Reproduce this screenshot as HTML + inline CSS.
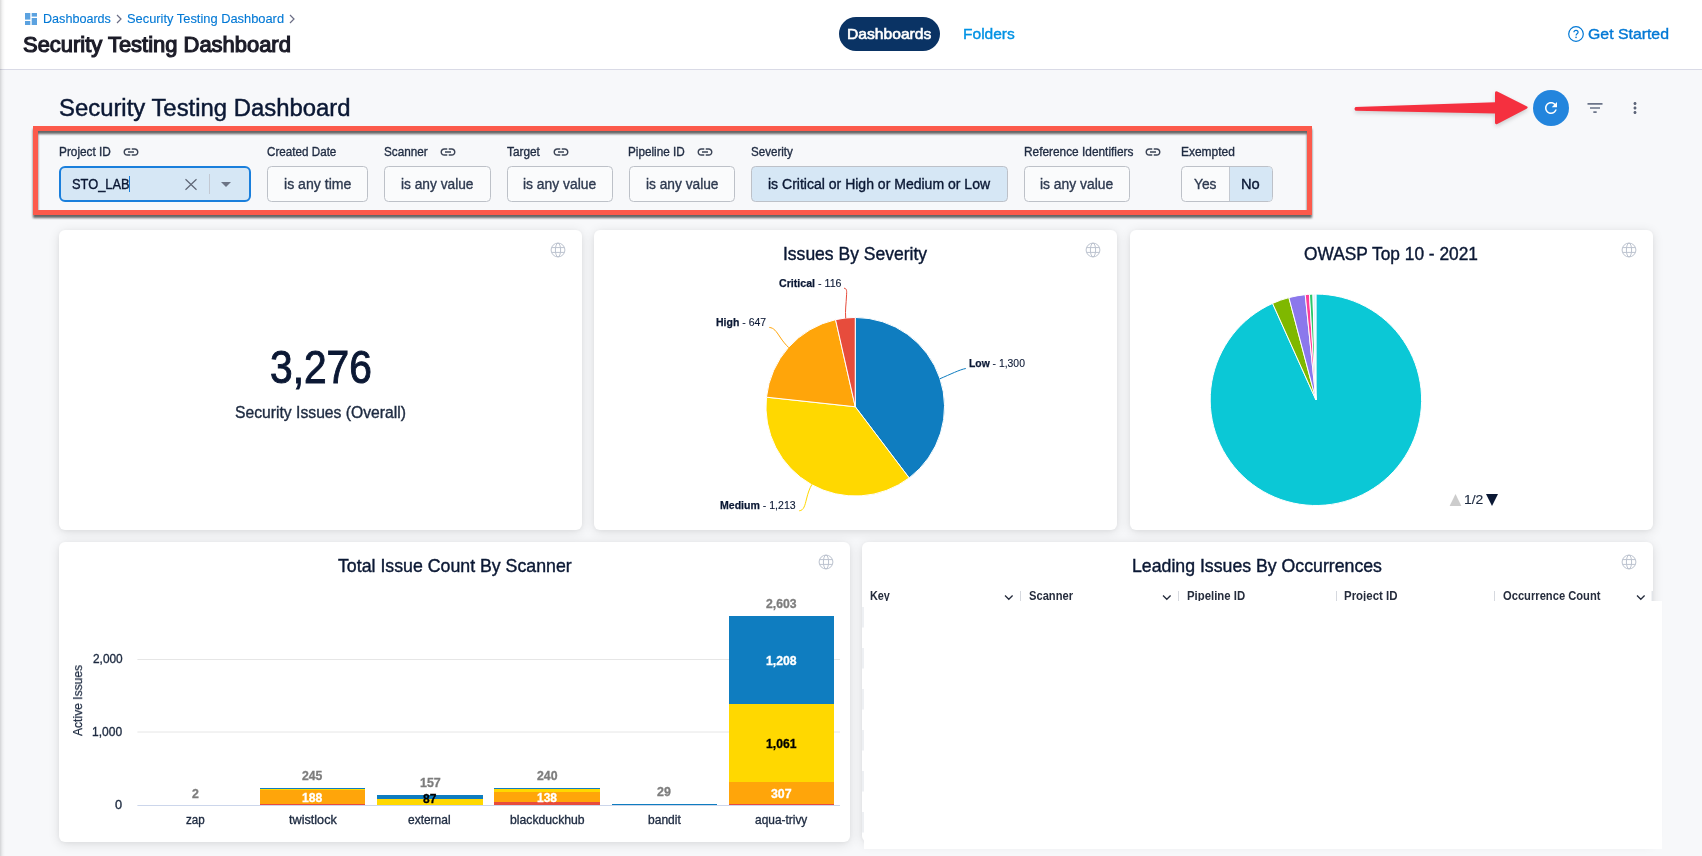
<!DOCTYPE html>
<html lang="en"><head><meta charset="utf-8"><title>Security Testing Dashboard</title>
<style>
*{box-sizing:border-box;margin:0;padding:0}
html,body{width:1702px;height:856px;overflow:hidden}
body{background:#f7f8fa;font-family:"Liberation Sans",sans-serif;position:relative;color:#0b1834}
.abs{position:absolute}
#txt{position:absolute;left:0;top:0;width:0;height:0}
.t{position:absolute;white-space:nowrap;transform-origin:0 0;display:block;line-height:normal}
.t b{font-weight:700;-webkit-text-stroke:.25px}
#hdr{position:absolute;left:0;top:0;width:1702px;height:70px;background:#fff;border-bottom:1px solid #d9dae6}
#edge{position:absolute;left:0;top:0;width:5px;height:856px;background:linear-gradient(90deg,rgba(0,0,0,.15),rgba(0,0,0,.09) 25%,rgba(0,0,0,.035) 55%,rgba(0,0,0,0))}
#pill{position:absolute;left:839px;top:17px;width:101px;height:34px;border-radius:17px;background:#0a3364}
svg{position:absolute;overflow:visible}
.card{position:absolute;background:#fff;border-radius:6px;box-shadow:0 2px 12px rgba(0,0,0,.11),0 1px 4px rgba(0,0,0,.04)}
.fbox{position:absolute;top:166px;height:36px;border:1px solid #bdc1c8;border-radius:4.5px;background:#fafbfc}
.fbox.sel{background:#d6e7f5}
#redbox{position:absolute;left:33px;top:126px;width:1279px;height:89px;border:5px solid #fc5a4b;filter:drop-shadow(0 3px 1.3px rgba(38,40,40,.7))}
#refresh{position:absolute;left:1533px;top:90px;width:36px;height:36px;border-radius:50%;background:#2385dd}
#ov{position:absolute;left:864px;top:601px;width:798px;height:248px;background:#fff}

</style></head>
<body>
<div id="hdr"></div>
<div id="edge"></div>
<!-- breadcrumb icon -->
<svg style="left:25px;top:13px" width="12" height="12" viewBox="0 0 12 12"><g fill="#5ba2e0"><rect x="0" y="0" width="5.3" height="6.6"/><rect x="6.7" y="0" width="5.3" height="3.6"/><rect x="0" y="8" width="5.3" height="4"/><rect x="6.7" y="5" width="5.3" height="7"/></g></svg>
<svg style="left:116px;top:14px" width="6" height="10" viewBox="0 0 6 10"><path d="M1 1 L5 5 L1 9" fill="none" stroke="#6b6d85" stroke-width="1.2"/></svg>
<svg style="left:289px;top:14px" width="6" height="10" viewBox="0 0 6 10"><path d="M1 1 L5 5 L1 9" fill="none" stroke="#6b6d85" stroke-width="1.2"/></svg>
<div id="pill"></div>
<!-- help icon -->
<svg style="left:1568px;top:26px" width="16" height="16" viewBox="0 0 16 16"><circle cx="8" cy="8" r="7.3" fill="none" stroke="#0278d5" stroke-width="1.2"/><path d="M5.9 6.3c0-1.2.9-2 2.1-2s2.1.8 2.1 1.9c0 1.5-2 1.7-2 3.2" fill="none" stroke="#0278d5" stroke-width="1.2"/><circle cx="8.05" cy="11.4" r=".8" fill="#0278d5"/></svg>

<!-- red arrow -->
<svg style="left:0;top:0" width="1702" height="140" viewBox="0 0 1702 140"><g filter="drop-shadow(0 2px 2px rgba(0,0,0,.18))"><path d="M1355.5 107 L1495 102.2 L1495 93 Q1495 90.4 1497.3 91.6 L1526.6 106.3 Q1528.8 107.5 1526.6 108.7 L1497.3 123.9 Q1495 125.1 1495 122.5 L1495 113.5 L1355.5 110.7 Q1353.5 108.8 1355.5 107 Z" fill="#f5303f"/></g></svg>
<div id="refresh"></div>
<svg style="left:1542px;top:99px" width="18" height="18" viewBox="0 0 24 24"><path fill="#fff" d="M17.65 6.35C16.2 4.9 14.21 4 12 4c-4.42 0-7.99 3.58-7.99 8s3.57 8 7.99 8c3.73 0 6.84-2.55 7.73-6h-2.08c-.82 2.33-3.04 4-5.65 4-3.31 0-6-2.69-6-6s2.69-6 6-6c1.66 0 3.14.69 4.22 1.78L13 11h7V4l-2.35 2.35z"/></svg>
<svg style="left:1585px;top:98px" width="20" height="20" viewBox="0 0 24 24"><path fill="#6b7489" d="M10 18h4v-2h-4v2zM3 6v2h18V6H3zm3 7h12v-2H6v2z"/></svg>
<svg style="left:1626px;top:99px" width="18" height="18" viewBox="0 0 24 24"><path fill="#5d6579" d="M12 8c1.1 0 2-.9 2-2s-.9-2-2-2-2 .9-2 2 .9 2 2 2zm0 2c-1.1 0-2 .9-2 2s.9 2 2 2 2-.9 2-2-.9-2-2-2zm0 6c-1.1 0-2 .9-2 2s.9 2 2 2 2-.9 2-2-.9-2-2-2z"/></svg>

<!-- filters -->
<div id="redbox"></div>
<div class="fbox sel" style="left:59px;width:192px;border:2px solid #1a7fdc;border-radius:6px"></div>
<div class="abs" style="left:129px;top:176px;width:1px;height:16px;background:#1a7fdc"></div>
<svg style="left:185px;top:179px" width="12" height="11" viewBox="0 0 12 11"><path d="M.5 .3 L11.5 10.7 M11.5 .3 L.5 10.7" stroke="#5f6675" stroke-width="1.2" fill="none"/></svg>
<div class="abs" style="left:209px;top:174px;width:1px;height:20px;background:#c3c9d3"></div>
<svg style="left:221px;top:182px" width="10" height="5" viewBox="0 0 10 5"><path d="M0 0H10L5 5Z" fill="#6c7485"/></svg>
<div class="fbox" style="left:267px;width:101px"></div>
<div class="fbox" style="left:384px;width:107px"></div>
<div class="fbox" style="left:507px;width:106px"></div>
<div class="fbox" style="left:629px;width:106px"></div>
<div class="fbox sel" style="left:751px;width:257px"></div>
<div class="fbox" style="left:1024px;width:106px"></div>
<div class="fbox" style="left:1181px;width:92px;overflow:hidden"><div class="abs" style="left:47px;top:0;width:44px;height:34px;background:#d6e7f5;border-left:1px solid #c4c9d1"></div></div>
<!-- link icons -->
<svg class="lnk" style="left:122px;top:143px" width="18" height="18" viewBox="0 0 24 24"><path fill="#3d4557" d="M3.9 12c0-1.71 1.39-3.1 3.1-3.1h4V7H7c-2.76 0-5 2.24-5 5s2.24 5 5 5h4v-1.9H7c-1.71 0-3.1-1.39-3.1-3.1zM8 13h8v-2H8v2zm9-6h-4v1.9h4c1.71 0 3.1 1.39 3.1 3.1s-1.39 3.1-3.1 3.1h-4V17h4c2.76 0 5-2.24 5-5s-2.24-5-5-5z"/></svg>
<svg class="lnk" style="left:439px;top:143px" width="18" height="18" viewBox="0 0 24 24"><path fill="#3d4557" d="M3.9 12c0-1.71 1.39-3.1 3.1-3.1h4V7H7c-2.76 0-5 2.24-5 5s2.24 5 5 5h4v-1.9H7c-1.71 0-3.1-1.39-3.1-3.1zM8 13h8v-2H8v2zm9-6h-4v1.9h4c1.71 0 3.1 1.39 3.1 3.1s-1.39 3.1-3.1 3.1h-4V17h4c2.76 0 5-2.24 5-5s-2.24-5-5-5z"/></svg>
<svg class="lnk" style="left:552px;top:143px" width="18" height="18" viewBox="0 0 24 24"><path fill="#3d4557" d="M3.9 12c0-1.71 1.39-3.1 3.1-3.1h4V7H7c-2.76 0-5 2.24-5 5s2.24 5 5 5h4v-1.9H7c-1.71 0-3.1-1.39-3.1-3.1zM8 13h8v-2H8v2zm9-6h-4v1.9h4c1.71 0 3.1 1.39 3.1 3.1s-1.39 3.1-3.1 3.1h-4V17h4c2.76 0 5-2.24 5-5s-2.24-5-5-5z"/></svg>
<svg class="lnk" style="left:696px;top:143px" width="18" height="18" viewBox="0 0 24 24"><path fill="#3d4557" d="M3.9 12c0-1.71 1.39-3.1 3.1-3.1h4V7H7c-2.76 0-5 2.24-5 5s2.24 5 5 5h4v-1.9H7c-1.71 0-3.1-1.39-3.1-3.1zM8 13h8v-2H8v2zm9-6h-4v1.9h4c1.71 0 3.1 1.39 3.1 3.1s-1.39 3.1-3.1 3.1h-4V17h4c2.76 0 5-2.24 5-5s-2.24-5-5-5z"/></svg>
<svg class="lnk" style="left:1144px;top:143px" width="18" height="18" viewBox="0 0 24 24"><path fill="#3d4557" d="M3.9 12c0-1.71 1.39-3.1 3.1-3.1h4V7H7c-2.76 0-5 2.24-5 5s2.24 5 5 5h4v-1.9H7c-1.71 0-3.1-1.39-3.1-3.1zM8 13h8v-2H8v2zm9-6h-4v1.9h4c1.71 0 3.1 1.39 3.1 3.1s-1.39 3.1-3.1 3.1h-4V17h4c2.76 0 5-2.24 5-5s-2.24-5-5-5z"/></svg>

<!-- cards -->
<div class="card" style="left:59px;top:230px;width:523px;height:300px"></div>
<div class="card" style="left:594px;top:230px;width:522.5px;height:300px"></div>
<div class="card" style="left:1130px;top:230px;width:522.5px;height:300px"></div>
<div class="card" style="left:59px;top:542px;width:791px;height:300px"></div>
<div class="card" style="left:862px;top:542px;width:791px;height:300px"></div>
<svg style="left:0;top:0" width="1702" height="856" viewBox="0 0 1702 856">
<g stroke="#fff" stroke-width="1" stroke-linejoin="round">
<path d="M855.25 406.75L855.25 317.45A89.3 89.3 0 0 1 909.17 477.93Z" fill="#0f7dc0"/>
<path d="M855.25 406.75L909.17 477.93A89.3 89.3 0 0 1 766.46 397.18Z" fill="#ffd800"/>
<path d="M855.25 406.75L766.46 397.18A89.3 89.3 0 0 1 835.55 319.65Z" fill="#ffa50a"/>
<path d="M855.25 406.75L835.55 319.65A89.3 89.3 0 0 1 855.25 317.45Z" fill="#e74c3c"/>
</g>
<g fill="none" stroke-width="1">
<path d="M844 288.2C847 288.5 846.8 291 846.5 296C846.2 304 845 310 845.7 318.2" stroke="#e74c3c"/>
<path d="M769.3 327.4C774 328 776 331 780 337C783 341.5 785.5 344.5 788.8 347.7" stroke="#ffa50a"/>
<path d="M965.8 368.5C960 369.5 950 374.5 940 378.7" stroke="#0f7dc0"/>
<path d="M799.2 510.8C804 510.5 805 505 806.5 499C808 493 809.5 488.5 811.9 484.4" stroke="#ffd800"/>
</g>
<g stroke="#fff" stroke-width="1" stroke-linejoin="round">
<path d="M1315.90 399.80L1315.90 294.10A105.7 105.7 0 1 1 1272.57 303.39Z" fill="#0bc8d6"/>
<path d="M1315.90 399.80L1272.57 303.39A105.7 105.7 0 0 1 1288.90 297.61Z" fill="#7fb800"/>
<path d="M1315.90 399.80L1288.90 297.61A105.7 105.7 0 0 1 1305.22 294.64Z" fill="#8b78ec"/>
<path d="M1315.90 399.80L1305.22 294.64A105.7 105.7 0 0 1 1309.45 294.30Z" fill="#ff3d9a"/>
<path d="M1315.90 399.80L1309.45 294.30A105.7 105.7 0 0 1 1312.95 294.14Z" fill="#2dc76d"/>
<path d="M1315.90 399.80L1312.95 294.14A105.7 105.7 0 0 1 1315.90 294.10Z" fill="#e3efff"/>
</g>
<path d="M1449.6 506L1455.5 494L1461.4 506Z" fill="#ccc"/>
<path d="M1486 494L1498 494L1492 506Z" fill="#0b1834"/>
<g stroke="#e6e6e6" stroke-width="1"><path d="M137.4 659.5H840M137.4 732H840"/></g>
<rect x="260" y="788.00" width="105" height="1.00" fill="#0f7dc0"/>
<rect x="260" y="789.00" width="105" height="1.00" fill="#ffd800"/>
<rect x="260" y="790.00" width="105" height="14.00" fill="#ffa50a"/>
<rect x="260" y="804.00" width="105" height="1.00" fill="#e74c3c"/>
<rect x="377" y="795.00" width="106" height="4.00" fill="#0f7dc0"/>
<rect x="377" y="799.00" width="106" height="6.00" fill="#ffd800"/>
<rect x="494" y="788.00" width="106" height="1.00" fill="#0f7dc0"/>
<rect x="494" y="789.00" width="106" height="3.00" fill="#ffd800"/>
<rect x="494" y="792.00" width="106" height="10.00" fill="#ffa50a"/>
<rect x="494" y="802.00" width="106" height="3.00" fill="#e74c3c"/>
<rect x="612" y="804.00" width="105" height="1.00" fill="#0f7dc0"/>
<rect x="729" y="616.00" width="105" height="88.00" fill="#0f7dc0"/>
<rect x="729" y="704.00" width="105" height="78.00" fill="#ffd800"/>
<rect x="729" y="782.00" width="105" height="22.00" fill="#ffa50a"/>
<rect x="729" y="804.00" width="105" height="1.00" fill="#e74c3c"/>
<path d="M137.4 805.5H840" stroke="#ccd6eb" stroke-width="1"/>
<g stroke="#d6d9df" stroke-width="1"><path d="M1020.5 591V601M1178.5 591V601M1336.5 591V601M1494.5 591V601M1652.2 591V601"/></g>
<g fill="none" stroke="#262d3d" stroke-width="1.3"><path d="M1005 595.5L1008.8 599.3L1012.6 595.5M1163 595.5L1166.8 599.3L1170.6 595.5M1637 595.5L1640.8 599.3L1644.6 595.5"/></g>
<g fill="#eef0f3"><rect x="862" y="607" width="2.5" height="20.5"/><rect x="862" y="648" width="2.5" height="20.5"/><rect x="862" y="689" width="2.5" height="20.5"/><rect x="862" y="730" width="2.5" height="20.5"/><rect x="862" y="771" width="2.5" height="20.5"/><rect x="862" y="812" width="2.5" height="20.5"/></g>
</svg>
<svg style="left:550px;top:242px" width="16" height="16" viewBox="-8 -8 16 16"><g fill="none" stroke="#bcc3cf" stroke-width="1"><circle r="6.9"/><ellipse rx="2.6" ry="6.9"/><path d="M-6.4 -2.4H6.4M-6.4 2.4H6.4"/></g></svg>
<svg style="left:1085px;top:242px" width="16" height="16" viewBox="-8 -8 16 16"><g fill="none" stroke="#bcc3cf" stroke-width="1"><circle r="6.9"/><ellipse rx="2.6" ry="6.9"/><path d="M-6.4 -2.4H6.4M-6.4 2.4H6.4"/></g></svg>
<svg style="left:1621px;top:242px" width="16" height="16" viewBox="-8 -8 16 16"><g fill="none" stroke="#bcc3cf" stroke-width="1"><circle r="6.9"/><ellipse rx="2.6" ry="6.9"/><path d="M-6.4 -2.4H6.4M-6.4 2.4H6.4"/></g></svg>
<svg style="left:818px;top:554px" width="16" height="16" viewBox="-8 -8 16 16"><g fill="none" stroke="#bcc3cf" stroke-width="1"><circle r="6.9"/><ellipse rx="2.6" ry="6.9"/><path d="M-6.4 -2.4H6.4M-6.4 2.4H6.4"/></g></svg>
<svg style="left:1621px;top:554px" width="16" height="16" viewBox="-8 -8 16 16"><g fill="none" stroke="#bcc3cf" stroke-width="1"><circle r="6.9"/><ellipse rx="2.6" ry="6.9"/><path d="M-6.4 -2.4H6.4M-6.4 2.4H6.4"/></g></svg>

<div id="txt">
<span class="t" id="t0" style="left:42.67px;top:11px;font-size:12.75px;font-weight:400;color:#0278d5;transform:scaleX(0.9872);-webkit-text-stroke:0.12px;">Dashboards</span>
<span class="t" id="t1" style="left:126.83px;top:11px;font-size:12.75px;font-weight:400;color:#0278d5;transform:scaleX(1.0088);-webkit-text-stroke:0.12px;">Security Testing Dashboard</span>
<span class="t" id="t2" style="left:23.42px;top:33px;font-size:21.16px;font-weight:400;color:#1c1c28;transform:scaleX(1.0369);-webkit-text-stroke:1.15px;">Security Testing Dashboard</span>
<span class="t" id="t3" style="left:846.69px;top:26px;font-size:14.78px;font-weight:400;color:#fff;transform:scaleX(1.0593);-webkit-text-stroke:0.60px;">Dashboards</span>
<span class="t" id="t4" style="left:963.37px;top:26px;font-size:14.78px;font-weight:400;color:#0092e4;transform:scaleX(1.0525);-webkit-text-stroke:0.37px;">Folders</span>
<span class="t" id="t5" style="left:1587.72px;top:26px;font-size:14.78px;font-weight:400;color:#0278d5;transform:scaleX(1.0726);-webkit-text-stroke:0.37px;">Get Started</span>
<span class="t" id="t6" style="left:59.21px;top:94px;font-size:24.64px;font-weight:400;color:#0b1834;transform:scaleX(0.9694);-webkit-text-stroke:0.47px;">Security Testing Dashboard</span>
<span class="t" id="t7" style="left:59.18px;top:145px;font-size:12.61px;font-weight:400;color:#1f2b42;transform:scaleX(0.9369);-webkit-text-stroke:0.35px;">Project ID</span>
<span class="t" id="t8" style="left:267.22px;top:145px;font-size:12.61px;font-weight:400;color:#1f2b42;transform:scaleX(0.9247);-webkit-text-stroke:0.35px;">Created Date</span>
<span class="t" id="t9" style="left:384.22px;top:145px;font-size:12.61px;font-weight:400;color:#1f2b42;transform:scaleX(0.9317);-webkit-text-stroke:0.35px;">Scanner</span>
<span class="t" id="t10" style="left:507.20px;top:145px;font-size:12.61px;font-weight:400;color:#1f2b42;transform:scaleX(0.9387);-webkit-text-stroke:0.35px;">Target</span>
<span class="t" id="t11" style="left:628.17px;top:145px;font-size:12.61px;font-weight:400;color:#1f2b42;transform:scaleX(0.9302);-webkit-text-stroke:0.35px;">Pipeline ID</span>
<span class="t" id="t12" style="left:750.60px;top:145px;font-size:12.61px;font-weight:400;color:#1f2b42;transform:scaleX(0.9186);-webkit-text-stroke:0.35px;">Severity</span>
<span class="t" id="t13" style="left:1023.99px;top:145px;font-size:12.61px;font-weight:400;color:#1f2b42;transform:scaleX(0.9404);-webkit-text-stroke:0.35px;">Reference Identifiers</span>
<span class="t" id="t14" style="left:1180.73px;top:145px;font-size:12.61px;font-weight:400;color:#1f2b42;transform:scaleX(0.9492);-webkit-text-stroke:0.35px;">Exempted</span>
<span class="t" id="t15" style="left:71.97px;top:176px;font-size:14.2px;font-weight:400;color:#0b1834;transform:scaleX(0.9048);-webkit-text-stroke:0.36px;">STO_LAB</span>
<span class="t" id="t16" style="left:284.02px;top:176px;font-size:14.35px;font-weight:400;color:#2e3a50;transform:scaleX(0.9828);-webkit-text-stroke:0.36px;">is any time</span>
<span class="t" id="t17" style="left:401.21px;top:176px;font-size:14.35px;font-weight:400;color:#2e3a50;transform:scaleX(0.9571);-webkit-text-stroke:0.36px;">is any value</span>
<span class="t" id="t18" style="left:523.10px;top:176px;font-size:14.35px;font-weight:400;color:#2e3a50;transform:scaleX(0.9651);-webkit-text-stroke:0.36px;">is any value</span>
<span class="t" id="t19" style="left:645.85px;top:176px;font-size:14.35px;font-weight:400;color:#2e3a50;transform:scaleX(0.9571);-webkit-text-stroke:0.36px;">is any value</span>
<span class="t" id="t20" style="left:1039.90px;top:176px;font-size:14.35px;font-weight:400;color:#2e3a50;transform:scaleX(0.9656);-webkit-text-stroke:0.36px;">is any value</span>
<span class="t" id="t21" style="left:768.30px;top:176px;font-size:14.35px;font-weight:400;color:#0b1834;transform:scaleX(0.9776);-webkit-text-stroke:0.36px;">is Critical or High or Medium or Low</span>
<span class="t" id="t22" style="left:1194.22px;top:176px;font-size:14.35px;font-weight:400;color:#2e3a50;transform:scaleX(0.9587);-webkit-text-stroke:0.36px;">Yes</span>
<span class="t" id="t23" style="left:1241.38px;top:176px;font-size:14.35px;font-weight:400;color:#0b1834;transform:scaleX(1.0251);-webkit-text-stroke:0.36px;">No</span>
<span class="t" id="t24" style="left:269.80px;top:342px;font-size:45.71px;font-weight:400;color:#0b1834;transform:scaleX(0.8903);-webkit-text-stroke:1.00px;">3,276</span>
<span class="t" id="t25" style="left:235.06px;top:403px;font-size:16.23px;font-weight:400;color:#1d2a40;transform:scaleX(0.9679);-webkit-text-stroke:0.38px;">Security Issues (Overall)</span>
<span class="t" id="t26" style="left:783.46px;top:243px;font-size:18.55px;font-weight:400;color:#0b1834;transform:scaleX(0.9450);-webkit-text-stroke:0.41px;">Issues By Severity</span>
<span class="t" id="t27" style="left:1304.08px;top:243px;font-size:18.55px;font-weight:400;color:#0b1834;transform:scaleX(0.9346);-webkit-text-stroke:0.41px;">OWASP Top 10 - 2021</span>
<span class="t" id="t28" style="left:337.70px;top:555px;font-size:18.55px;font-weight:400;color:#0b1834;transform:scaleX(0.9572);-webkit-text-stroke:0.41px;">Total Issue Count By Scanner</span>
<span class="t" id="t29" style="left:1131.69px;top:555px;font-size:18.55px;font-weight:400;color:#0b1834;transform:scaleX(0.9554);-webkit-text-stroke:0.41px;">Leading Issues By Occurrences</span>
<span class="t" id="t30" style="left:779.28px;top:277px;font-size:11.16px;font-weight:400;color:#0b1834;transform:scaleX(0.9531);-webkit-text-stroke:0.12px;"><b>Critical</b> - 116</span>
<span class="t" id="t31" style="left:715.78px;top:316px;font-size:11.16px;font-weight:400;color:#0b1834;transform:scaleX(0.9403);-webkit-text-stroke:0.12px;"><b>High</b> - 647</span>
<span class="t" id="t32" style="left:968.79px;top:357px;font-size:11.16px;font-weight:400;color:#0b1834;transform:scaleX(0.9294);-webkit-text-stroke:0.12px;"><b>Low</b> - 1,300</span>
<span class="t" id="t33" style="left:719.96px;top:499px;font-size:11.16px;font-weight:400;color:#0b1834;transform:scaleX(0.9452);-webkit-text-stroke:0.12px;"><b>Medium</b> - 1,213</span>
<span class="t" id="t34" style="left:1464.17px;top:492px;font-size:13.04px;font-weight:400;color:#1d2a40;transform:scaleX(1.0691);-webkit-text-stroke:0.15px;">1/2</span>
<span class="t" id="t35" style="left:92.72px;top:652px;font-size:12.17px;font-weight:400;color:#1d2a40;transform:scaleX(0.9767);-webkit-text-stroke:0.34px;">2,000</span>
<span class="t" id="t36" style="left:92.10px;top:725px;font-size:12.17px;font-weight:400;color:#1d2a40;transform:scaleX(0.9898);-webkit-text-stroke:0.34px;">1,000</span>
<span class="t" id="t37" style="left:114.90px;top:798px;font-size:12.17px;font-weight:400;color:#1d2a40;transform:scaleX(1.0494);-webkit-text-stroke:0.34px;">0</span>
<span class="t" id="t38" style="left:186.00px;top:813px;font-size:12.32px;font-weight:400;color:#1d2a40;transform:scaleX(0.9426);-webkit-text-stroke:0.34px;">zap</span>
<span class="t" id="t39" style="left:288.90px;top:813px;font-size:12.32px;font-weight:400;color:#1d2a40;transform:scaleX(1.0273);-webkit-text-stroke:0.34px;">twistlock</span>
<span class="t" id="t40" style="left:408.01px;top:813px;font-size:12.32px;font-weight:400;color:#1d2a40;transform:scaleX(0.9712);-webkit-text-stroke:0.34px;">external</span>
<span class="t" id="t41" style="left:509.94px;top:813px;font-size:12.32px;font-weight:400;color:#1d2a40;transform:scaleX(0.9911);-webkit-text-stroke:0.34px;">blackduckhub</span>
<span class="t" id="t42" style="left:648.00px;top:813px;font-size:12.32px;font-weight:400;color:#1d2a40;transform:scaleX(0.9777);-webkit-text-stroke:0.34px;">bandit</span>
<span class="t" id="t43" style="left:754.82px;top:813px;font-size:12.32px;font-weight:400;color:#1d2a40;transform:scaleX(0.9677);-webkit-text-stroke:0.34px;">aqua-trivy</span>
<span class="t" id="t44" style="left:191.85px;top:787px;font-size:12.32px;font-weight:700;color:#7d7d7d;transform:scaleX(1.0019);-webkit-text-stroke:0.30px;">2</span>
<span class="t" id="t45" style="left:301.69px;top:769px;font-size:12.32px;font-weight:700;color:#7d7d7d;transform:scaleX(0.9941);-webkit-text-stroke:0.30px;">245</span>
<span class="t" id="t46" style="left:420.04px;top:776px;font-size:12.32px;font-weight:700;color:#7d7d7d;transform:scaleX(1.0104);-webkit-text-stroke:0.30px;">157</span>
<span class="t" id="t47" style="left:536.70px;top:769px;font-size:12.32px;font-weight:700;color:#7d7d7d;transform:scaleX(0.9977);-webkit-text-stroke:0.30px;">240</span>
<span class="t" id="t48" style="left:657.10px;top:785px;font-size:12.32px;font-weight:700;color:#7d7d7d;transform:scaleX(1.0115);-webkit-text-stroke:0.30px;">29</span>
<span class="t" id="t49" style="left:765.82px;top:597px;font-size:12.32px;font-weight:700;color:#7d7d7d;transform:scaleX(0.9914);-webkit-text-stroke:0.30px;">2,603</span>
<span class="t" id="t50" style="left:301.64px;top:791px;font-size:12.32px;font-weight:700;color:#fff;transform:scaleX(0.9940);-webkit-text-stroke:0.30px;">188</span>
<span class="t" id="t51" style="left:423.38px;top:792px;font-size:12.32px;font-weight:700;color:#000;transform:scaleX(0.9746);-webkit-text-stroke:0.30px;">87</span>
<span class="t" id="t52" style="left:537.00px;top:791px;font-size:12.32px;font-weight:700;color:#fff;transform:scaleX(0.9734);-webkit-text-stroke:0.30px;">138</span>
<span class="t" id="t53" style="left:766.10px;top:654px;font-size:12.32px;font-weight:700;color:#fff;transform:scaleX(0.9948);-webkit-text-stroke:0.30px;">1,208</span>
<span class="t" id="t54" style="left:766.10px;top:737px;font-size:12.32px;font-weight:700;color:#000;transform:scaleX(0.9873);-webkit-text-stroke:0.30px;">1,061</span>
<span class="t" id="t55" style="left:771.37px;top:787px;font-size:12.32px;font-weight:700;color:#fff;transform:scaleX(1.0015);-webkit-text-stroke:0.30px;">307</span>
<span class="t" id="t56" style="left:71px;top:736.06px;font-size:12.1px;font-weight:400;color:#1d2a40;transform:rotate(-90deg) scaleX(0.9962);will-change:transform;-webkit-text-stroke:0.25px;">Active Issues</span>
<span class="t" id="t57" style="left:869.96px;top:589px;font-size:12.61px;font-weight:700;color:#262d3d;transform:scaleX(0.8600);">Key</span>
<span class="t" id="t58" style="left:1029.20px;top:589px;font-size:12.61px;font-weight:700;color:#262d3d;transform:scaleX(0.8841);">Scanner</span>
<span class="t" id="t59" style="left:1187.15px;top:589px;font-size:12.61px;font-weight:700;color:#262d3d;transform:scaleX(0.9019);">Pipeline ID</span>
<span class="t" id="t60" style="left:1344.20px;top:589px;font-size:12.61px;font-weight:700;color:#262d3d;transform:scaleX(0.9098);">Project ID</span>
<span class="t" id="t61" style="left:1503.10px;top:589px;font-size:12.61px;font-weight:700;color:#262d3d;transform:scaleX(0.8862);">Occurrence Count</span>
</div>
<div id="ov"></div>
</body></html>
